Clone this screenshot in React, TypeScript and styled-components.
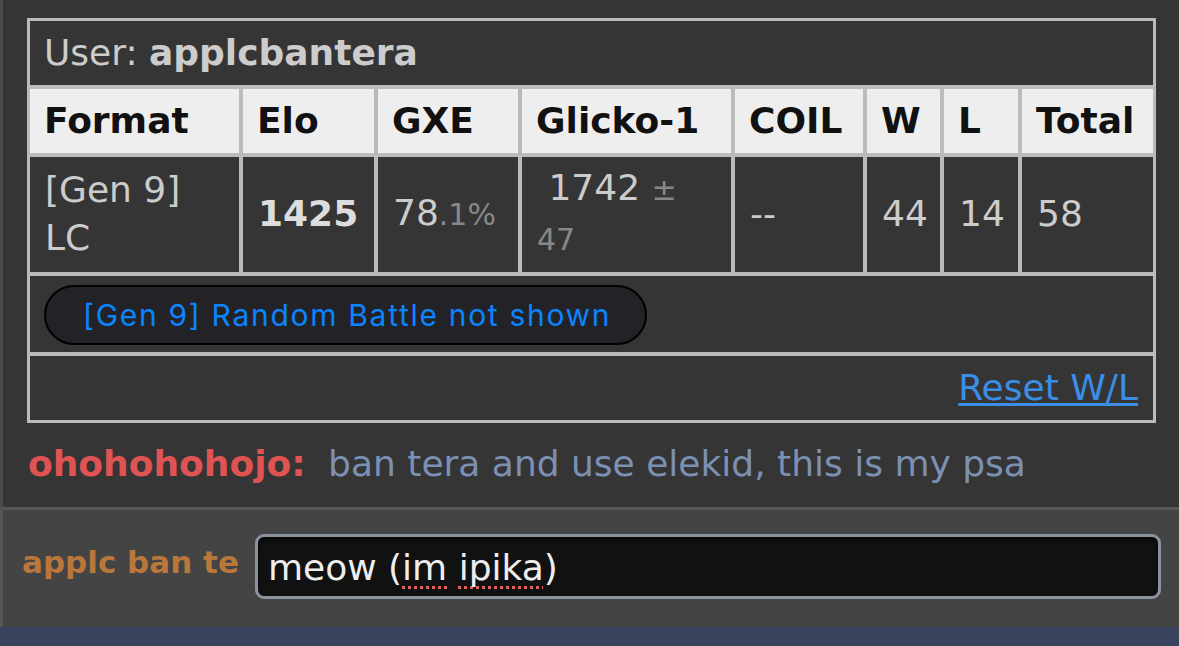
import React from 'react';
import styled, { createGlobalStyle } from 'styled-components';

const GlobalStyle = createGlobalStyle`
  html, body {
    margin: 0;
    padding: 0;
    background: #353535;
  }

  body {
    font-family: "DejaVu Sans", Verdana, sans-serif;
  }
`;

const Page = styled.div`
  width: 1179px;
  height: 646px;
  display: flex;
  flex-direction: column;
  overflow: hidden;
`;

const ChatLog = styled.div`
  flex: 1;
  background: #353535;
  border-left: 3px solid #4a4a4a;
  padding: 18px 23px 0 24px;
`;

const RankTable = styled.div`
  display: grid;
  grid-template-columns: 213px 135px 144px 213px 132px 77px 78px 135px;
  width: 1129px;
  box-sizing: border-box;
  border: 1px solid #bbb;
  font-size: 36px;
  line-height: 48px;
`;

const Cell = styled.div`
  box-sizing: border-box;
  border: 2px solid #bbb;
  padding: 8px 15px;
  color: #ccc;
`;

const TitleCell = styled(Cell)`
  grid-column: 1 / -1;
  padding-left: 14px;
`;

const HeadCell = styled(Cell)`
  background: #eee;
  color: #111;
  font-weight: bold;
  white-space: nowrap;
  padding-left: 14px;
`;

const DataCell = styled(Cell)<{ $strong?: boolean }>`
  display: flex;
  align-items: center;
  padding: 7px 15px 8px;
  font-weight: ${(p) => (p.$strong ? 'bold' : 'normal')};
  color: ${(p) => (p.$strong ? '#ddd' : '#ccc')};
`;

const Dim = styled.small`
  font-size: 30px;
  color: #888;
`;

const NoticeCell = styled(Cell)`
  grid-column: 1 / -1;
  padding: 9px 14px 7px;
  line-height: 0;
`;

const HiddenPill = styled.button`
  height: 60px;
  box-sizing: border-box;
  padding: 0 34px 0 37px;
  border: 2px solid #000;
  border-radius: 30px;
  background: #232327;
  color: #0a84ff;
  font-family: Inter, "Noto Sans", sans-serif;
  font-size: 30px;
  letter-spacing: 1.7px;
  line-height: 56px;
  cursor: pointer;
`;

const ActionCell = styled(Cell)`
  grid-column: 1 / -1;
  text-align: right;
  padding: 8px 15px;
`;

const ResetLink = styled.a`
  color: #3a8ee6;
  text-decoration: underline;
  text-decoration-thickness: 3px;
  text-underline-offset: 3px;
`;

const ChatLine = styled.div`
  margin-top: 17px;
  padding-left: 1px;
  font-size: 36px;
  line-height: 48px;
  white-space: nowrap;
`;

const Author = styled.strong`
  color: #e05353;
`;

const Message = styled.span`
  margin-left: 11px;
  color: #7b90b3;
`;

const Composer = styled.div`
  height: 113px;
  display: flex;
  align-items: center;
  gap: 16px;
  padding: 0 18px 4px 19px;
  background: #444;
  border-top: 3px solid #565656;
  border-left: 3px solid #555;
`;

const ComposerName = styled.strong`
  margin-bottom: 10px;
  font-size: 31px;
  color: #b9773c;
  white-space: nowrap;
`;

const ComposeBox = styled.div`
  flex: 1;
  height: 65px;
  box-sizing: border-box;
  padding: 3px 10px 0;
  border: 3px solid #8b949e;
  border-radius: 9px;
  background: #111;
  box-shadow: inset 0 3px 4px rgba(0, 0, 0, 0.7);
  color: #eee;
  font-size: 36px;
  line-height: 56px;
  white-space: nowrap;
  overflow: hidden;
`;

const Typo = styled.span`
  text-decoration: underline dotted #e0605e;
  text-decoration-thickness: 3px;
  text-underline-offset: 6px;
  text-decoration-skip-ink: none;
`;

const BottomBar = styled.div`
  height: 19px;
  background: #39445f;
`;

const headers = ['Format', 'Elo', 'GXE', 'Glicko-1', 'COIL', 'W', 'L', 'Total'];

export default function App() {
  return (
    <>
      <GlobalStyle />
      <Page>
        <ChatLog>
          <RankTable>
            <TitleCell>
              User: <strong>applcbantera</strong>
            </TitleCell>
            {headers.map((h) => (
              <HeadCell key={h}>{h}</HeadCell>
            ))}
            <DataCell>
              [Gen 9]
              <br />
              LC
            </DataCell>
            <DataCell $strong>1425</DataCell>
            <DataCell>
              <span>
                78<Dim>.1%</Dim>
              </span>
            </DataCell>
            <DataCell>
              <span>
                &nbsp;1742 <Dim>± 47</Dim>
              </span>
            </DataCell>
            <DataCell>--</DataCell>
            <DataCell>44</DataCell>
            <DataCell>14</DataCell>
            <DataCell>58</DataCell>
            <NoticeCell>
              <HiddenPill>[Gen 9] Random Battle not shown</HiddenPill>
            </NoticeCell>
            <ActionCell>
              <ResetLink href="#">Reset W/L</ResetLink>
            </ActionCell>
          </RankTable>
          <ChatLine>
            <Author>ohohohohojo:</Author> <Message>ban tera and use elekid, this is my psa</Message>
          </ChatLine>
        </ChatLog>
        <Composer>
          <ComposerName>applc ban te</ComposerName>
          <ComposeBox role="textbox">
            meow (<Typo>im</Typo> <Typo>ipika</Typo>)
          </ComposeBox>
        </Composer>
        <BottomBar />
      </Page>
    </>
  );
}
